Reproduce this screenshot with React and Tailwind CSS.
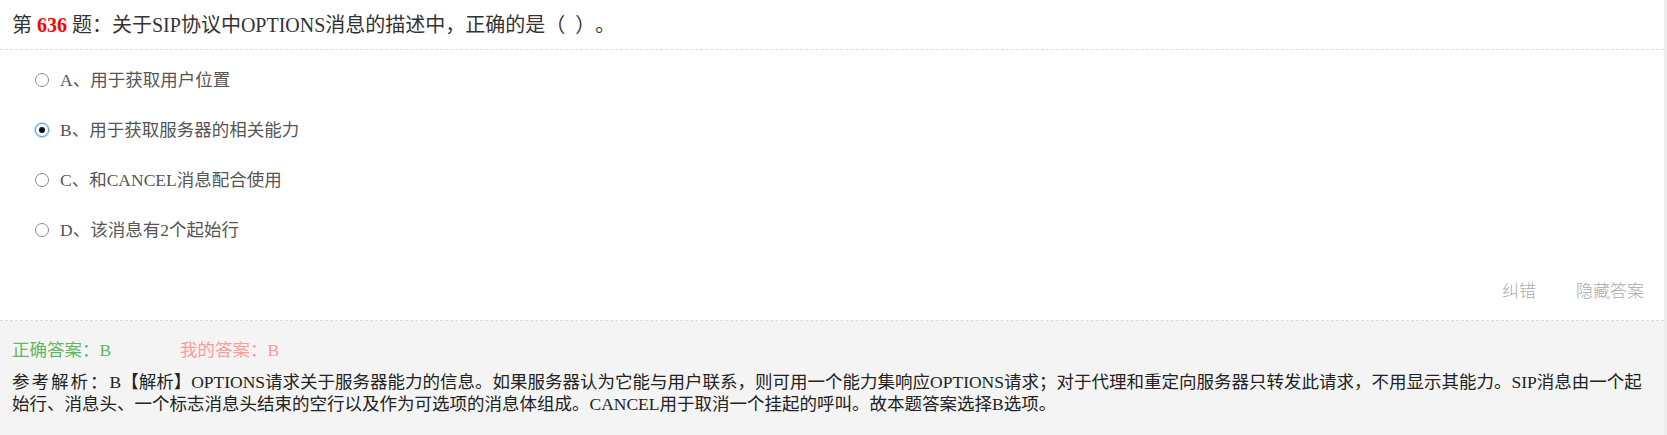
import React from "react";

const FONT = { fontFamily: '"Liberation Serif", "Noto Sans CJK SC", serif' };

function Radio({ checked }) {
  if (checked) {
    return (
      <span className="w-[14px] h-[14px] rounded-full border border-[#4a9ce8] bg-white flex items-center justify-center shrink-0 shadow-[0_0_0_1px_rgba(74,156,232,0.35)]">
        <span className="w-[6px] h-[6px] rounded-full bg-[#111]" />
      </span>
    );
  }
  return <span className="w-[14px] h-[14px] rounded-full border border-[#8a8a8a] bg-white shrink-0" />;
}

const options = [
  { key: "A", text: "用于获取用户位置" },
  { key: "B", text: "用于获取服务器的相关能力", checked: true },
  { key: "C", text: "和CANCEL消息配合使用" },
  { key: "D", text: "该消息有2个起始行" },
];

export default function App() {
  return (
    <div className="flex w-[1667px] h-[435px] bg-white overflow-hidden [text-spacing-trim:space-all]" style={FONT}>
      <div className="w-[1664px] flex flex-col">
        <div className="h-[50px] px-3 flex items-center border-b border-dashed border-[#dcdcdc] text-[20px] text-[#333] whitespace-nowrap">
          <span>第 </span>
          <span className="text-[#f00] font-bold">&nbsp;636&nbsp;</span>
          <span> 题：关于SIP协议中OPTIONS消息的描述中，正确的是（&nbsp;&nbsp;）。</span>
        </div>
        <div className="pt-[5px] pl-[35px] flex flex-col">
          {options.map((o) => (
            <div key={o.key} className="h-[50px] flex items-center gap-[11px] text-[17.5px] text-[#555]">
              <Radio checked={o.checked} />
              <span>{o.key}、{o.text}</span>
            </div>
          ))}
        </div>
        <div className="h-[50px] mt-[10px] flex items-center justify-end gap-[40px] pr-[20px] text-[17px] text-[#aaa]" style={{ fontFamily: '"Noto Sans CJK SC", sans-serif', fontWeight: 300 }}>
          <span>纠错</span>
          <span>隐藏答案</span>
        </div>
        <div className="h-[6px] border-b border-dashed border-[#dcdcdc]" />
        <div className="flex-1 bg-[#f4f4f4] px-3 pt-[18px] text-[17.5px] leading-[22px]">
          <div className="flex">
            <span className="w-[168px] text-[#5cb85c]">正确答案：B</span>
            <span className="text-[#ff9b9b]">我的答案：B</span>
          </div>
          <div className="mt-[10px] text-[#222]">
            <span className="tracking-[2px]">参考解析：</span>B【解析】OPTIONS请求关于服务器能力的信息。如果服务器认为它能与用户联系，则可用一个能力集响应OPTIONS请求；对于代理和重定向服务器只转发此请求，不用显示其能力。SIP消息由一个起<br />始行、消息头、一个标志消息头结束的空行以及作为可选项的消息体组成。CANCEL用于取消一个挂起的呼叫。故本题答案选择B选项。
          </div>
        </div>
      </div>
      <div className="w-[3px] bg-[#ececec]" />
    </div>
  );
}
